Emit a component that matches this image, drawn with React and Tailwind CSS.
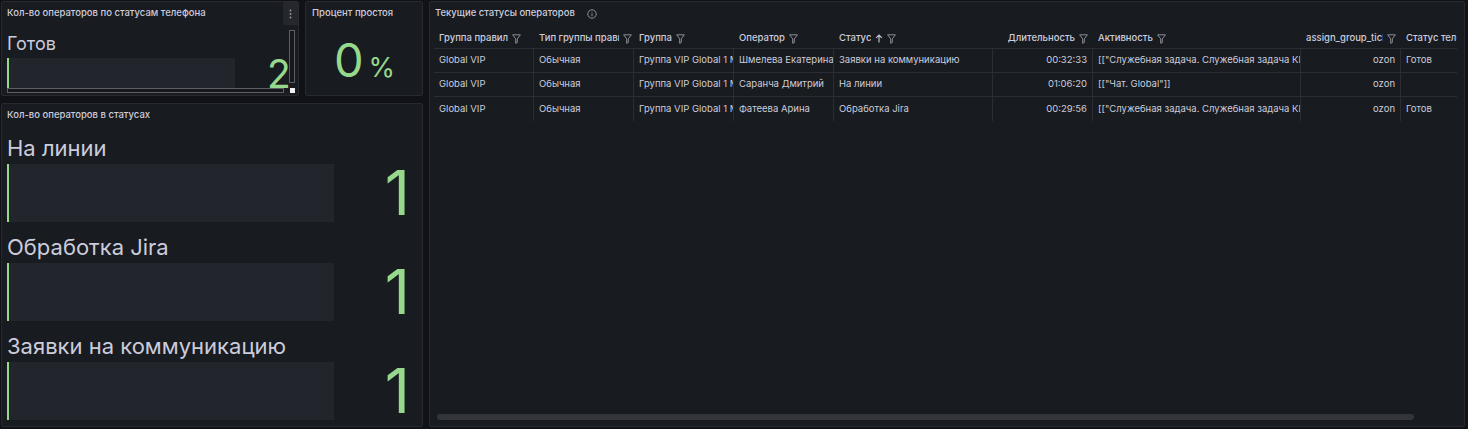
import React from "react";

const Funnel = () => (
  <svg width="9" height="10" viewBox="0 0 9 10" className="shrink-0">
    <path d="M0.6 0.8h7.8L5.3 4.8v3.7L3.7 9.3V4.8z" fill="none" stroke="#8e8e99" strokeWidth="1" strokeLinejoin="round" />
  </svg>
);

const SortUp = () => (
  <svg width="8" height="9" viewBox="0 0 8 9" className="shrink-0">
    <path d="M4 8.5V1M1.2 3.8L4 1l2.8 2.8" fill="none" stroke="#ccccdc" strokeWidth="1.1" />
  </svg>
);

const InfoIcon = () => (
  <svg width="10" height="10" viewBox="0 0 10 10">
    <circle cx="5" cy="5" r="4.2" fill="none" stroke="#8e8e99" strokeWidth="1" />
    <path d="M5 4.4v2.8" stroke="#8e8e99" strokeWidth="1.1" />
    <circle cx="5" cy="3" r="0.6" fill="#8e8e99" />
  </svg>
);

const Dots = () => (
  <svg width="3" height="10" viewBox="0 0 3 10">
    <circle cx="1.5" cy="1.5" r="0.9" fill="#9a9aa5" />
    <circle cx="1.5" cy="5" r="0.9" fill="#9a9aa5" />
    <circle cx="1.5" cy="8.5" r="0.9" fill="#9a9aa5" />
  </svg>
);

const columns = [
  { title: "Группа правил", w: 100 },
  { title: "Тип группы правил", w: 100 },
  { title: "Группа", w: 100 },
  { title: "Оператор", w: 100 },
  { title: "Статус", w: 159, sort: true },
  { title: "Длительность", w: 100, right: true },
  { title: "Активность", w: 208 },
  { title: "assign_group_ticket_id", w: 100, right: true },
  { title: "Статус телефона", w: 110 },
];

const rows = [
  ["Global VIP", "Обычная", "Группа VIP Global 1 Миграция", "Шмелева Екатерина", "Заявки на коммуникацию", "00:32:33", '[["Служебная задача. Служебная задача КЦ"]]', "ozon", "Готов"],
  ["Global VIP", "Обычная", "Группа VIP Global 1 Миграция", "Саранча Дмитрий", "На линии", "01:06:20", '[["Чат. Global"]]', "ozon", ""],
  ["Global VIP", "Обычная", "Группа VIP Global 1 Миграция", "Фатеева Арина", "Обработка Jira", "00:29:56", '[["Служебная задача. Служебная задача КЦ"]]', "ozon", "Готов"],
];

const statusItems = ["На линии", "Обработка Jira", "Заявки на коммуникацию"];

export default function App() {
  return (
    <div className="w-[1468px] h-[429px] bg-[#111217] pt-px pl-px flex gap-[6px] overflow-hidden text-[#ccccdc] font-['Inter','Noto_Sans',sans-serif]">
      {/* Left column */}
      <div className="w-[422px] h-[426px] flex flex-col gap-[7px] shrink-0">
        <div className="h-[95px] flex gap-[6px]">
          {/* Panel 1 */}
          <div className="relative w-[298px] h-full bg-[#181b1f] border border-[#27292f] rounded-[2px] overflow-hidden flex flex-col">
            <div className="h-[23px] flex items-center pl-[5px] text-[9.5px] font-medium whitespace-nowrap">
              Кол-во операторов по статусам телефона
            </div>
            <div className="absolute right-0 top-0 w-[15px] h-[23px] bg-[#25272d] flex items-center justify-center">
              <Dots />
            </div>
            <div className="pl-[5px] pt-[8px] flex flex-col">
              <div className="h-[22px] text-[18px] leading-[22px]">Готов</div>
              <div className="mt-[3px] flex items-end h-[30px]">
                <div className="w-[228px] h-[30px] bg-[#22252b] border-l-2 border-[#96d98d]" />
                <div className="ml-[32px] text-[39px] leading-[30px] text-[#96d98d] translate-y-[1px]">2</div>
              </div>
            </div>
            <div className="absolute left-[287px] top-[28px] w-[6px] h-[53px] border border-[#5c5e66] bg-[#15171b]" />
            <div className="absolute left-[5px] top-[86px] w-[277px] h-[5px] border border-[#5c5e66] bg-[#15171b]" />
            <div className="absolute left-[288px] top-[86px] w-[5px] h-[5px] bg-[#f2f2f2]" />
          </div>
          {/* Panel 2 */}
          <div className="flex-1 h-full bg-[#181b1f] border border-[#27292f] rounded-[2px] flex flex-col">
            <div className="h-[23px] flex items-center pl-[6px] text-[9.5px] font-medium whitespace-nowrap">
              Процент простоя
            </div>
            <div className="flex-1 flex items-center justify-center pb-[1px] pl-[1px]">
              <div className="flex items-baseline text-[#96d98d] gap-[5px]">
                <span className="text-[47px] leading-none">0</span>
                <span className="text-[27px] leading-none">%</span>
              </div>
            </div>
          </div>
        </div>
        {/* Panel 3 */}
        <div className="flex-1 bg-[#181b1f] border border-[#27292f] rounded-[2px] flex flex-col">
          <div className="h-[22px] flex items-center pl-[5px] text-[9.5px] font-medium whitespace-nowrap">
            Кол-во операторов в статусах
          </div>
          <div className="pl-[5px] pr-[12px] pt-[10px] flex flex-col gap-[13px]">
            {statusItems.map((s) => (
              <div key={s} className="flex flex-col gap-[4px]">
                <div className="h-[24px] text-[22px] leading-[24px] whitespace-nowrap">{s}</div>
                <div className="flex items-center h-[58px]">
                  <div className="w-[327px] h-[58px] bg-[#22252b] border-l-2 border-[#96d98d]" />
                  <div className="flex-1 text-right text-[62px] leading-none text-[#96d98d]">1</div>
                </div>
              </div>
            ))}
          </div>
        </div>
      </div>

      {/* Table panel */}
      <div className="w-[1036px] h-[426px] bg-[#181b1f] border border-[#27292f] rounded-[2px] flex flex-col">
        <div className="h-[23px] flex items-center pl-[5px] gap-[12px] text-[9.5px] font-medium whitespace-nowrap">
          <span>Текущие статусы операторов</span>
          <InfoIcon />
        </div>
        <div className="ml-[4px] w-[1023px] flex-1 overflow-hidden flex flex-col">
          <div className="h-[4px]" />
          <div className="flex h-[20px] border-b border-[#2b2d33] w-max">
            {columns.map((c) => (
              <div
                key={c.title}
                style={{ width: c.w }}
                className={
                  "shrink-0 flex items-center gap-[4px] text-[9.5px] font-medium whitespace-nowrap overflow-hidden " +
                  (c.right ? "justify-end pr-[5px] pl-[5px]" : "pl-[5px] pr-[2px]")
                }
              >
                <span className="overflow-hidden min-w-0 shrink">{c.title}</span>
                {c.sort && <SortUp />}
                <Funnel />
              </div>
            ))}
          </div>
          {rows.map((r, i) => (
            <div key={i} className={"flex h-[24px] w-max " + (i < rows.length - 1 ? "border-b border-[#2b2d33]" : "")}>
              {r.map((v, j) => (
                <div
                  key={j}
                  style={{ width: columns[j].w }}
                  className={
                    "shrink-0 h-full flex items-center px-[5px] text-[9.5px] whitespace-nowrap overflow-hidden " +
                    (j < 8 ? "border-r border-[#2b2d33] " : "") +
                    (columns[j].right ? "justify-end" : "")
                  }
                >
                  <span className="shrink-0">{v}</span>
                </div>
              ))}
            </div>
          ))}
          <div className="flex-1" />
          <div className="h-[6px] w-[977px] ml-[3px] mb-[6px] rounded-[3px] bg-[#33353b]" />
        </div>
      </div>
    </div>
  );
}
